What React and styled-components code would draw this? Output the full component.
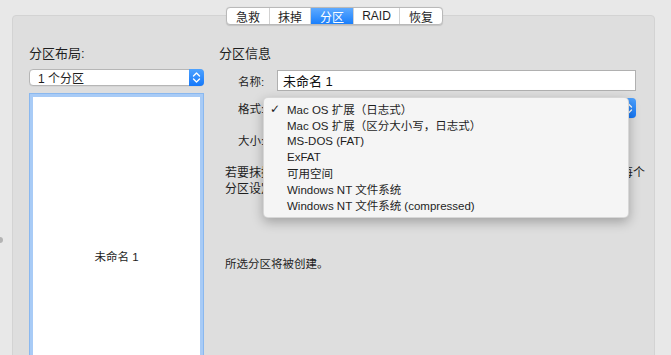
import React from "react";
import styled, { createGlobalStyle } from "styled-components";

const GlobalStyle = createGlobalStyle`
  html, body {
    margin: 0;
    padding: 0;
    background: #e8e8e8;
  }
  body {
    font-family: "Liberation Sans", "Noto Sans CJK SC", sans-serif;
    color: #1e1e1e;
  }
`;

const tabs = ["急救", "抹掉", "分区", "RAID", "恢复"];
const tabWidths = [42, 41, 43, 46, 43];

const formats = [
  "Mac OS 扩展（日志式）",
  "Mac OS 扩展（区分大小写，日志式）",
  "MS-DOS (FAT)",
  "ExFAT",
  "可用空间",
  "Windows NT 文件系统",
  "Windows NT 文件系统 (compressed)",
];

const Stepper = () => (
  <StepperBox>
    <svg width="9" height="13" viewBox="0 0 9 13">
      <path
        d="M1.5 5 L4.5 2 L7.5 5 M1.5 8 L4.5 11 L7.5 8"
        fill="none"
        stroke="#ffffff"
        strokeWidth="1.4"
        strokeLinecap="round"
        strokeLinejoin="round"
      />
    </svg>
  </StepperBox>
);

const App = () => {
  return (
    <>
      <GlobalStyle />
      <Window>
        <EdgeDot />
        <TabBar>
          {tabs.map((t, i) => (
            <Tab key={t} $active={i === 2} $width={tabWidths[i]}>
              {t}
            </Tab>
          ))}
        </TabBar>
        <Panel>
          <LeftColumn>
            <Heading>分区布局:</Heading>
            <Popup>
              <PopupText>1 个分区</PopupText>
              <Stepper />
            </Popup>
            <ListBox>
              <ListItem>未命名 1</ListItem>
            </ListBox>
          </LeftColumn>
          <RightColumn>
            <Heading>分区信息</Heading>
            <Form>
              <Label>名称:</Label>
              <TextField>未命名 1</TextField>
              <Label>格式:</Label>
              <FormatCell>
                <Popup $tall>
                  <PopupText />
                  <Stepper />
                </Popup>
                <Menu>
                  {formats.map((f, i) => (
                    <MenuItem key={f}>
                      <Check>{i === 0 ? "✓" : ""}</Check>
                      {f}
                    </MenuItem>
                  ))}
                </Menu>
              </FormatCell>
              <Label $spaced>大小:</Label>
              <SizeField />
            </Form>
            <Description>
              <Line>若要抹掉并对此磁盘进行分区，请从分区布局弹出式菜单中选择布局，再为每个</Line>
              <Line>分区设定选项，然后点按应用。</Line>
            </Description>
            <Note>所选分区将被创建。</Note>
          </RightColumn>
        </Panel>
      </Window>
    </>
  );
};

export default App;

const Window = styled.div`
  position: relative;
  width: 671px;
  height: 355px;
  overflow: hidden;
  padding-top: 7px;
  box-sizing: border-box;
  display: flex;
  flex-direction: column;
  align-items: center;
`;

const EdgeDot = styled.span`
  position: absolute;
  left: -3px;
  top: 237px;
  width: 6px;
  height: 6px;
  border-radius: 50%;
  background: #b4b4b4;
`;

const TabBar = styled.div`
  position: relative;
  z-index: 2;
  flex-shrink: 0;
  display: flex;
  height: 18px;
  margin-bottom: -10px;
  margin-left: -2px;
  background: #ffffff;
  border: 1px solid #b9b9b9;
  border-radius: 4px;
  box-sizing: border-box;
  overflow: hidden;
  box-shadow: 0 0.5px 1px rgba(0, 0, 0, 0.12);
`;

const Tab = styled.div`
  width: ${(p) => p.$width}px;
  display: flex;
  align-items: center;
  justify-content: center;
  font-size: 12px;
  color: ${(p) => (p.$active ? "#ffffff" : "#1e1e1e")};
  background: ${(p) =>
    p.$active ? "linear-gradient(#5eaaff, #1a7ffb)" : "transparent"};
  border-left: 1px solid #d2d2d2;
  box-sizing: border-box;

  &:first-child {
    border-left: none;
  }
`;

const Panel = styled.div`
  align-self: stretch;
  flex-shrink: 0;
  height: 360px;
  margin: 0 16px 0 12px;
  background: #dedede;
  border: 1px solid #d3d3d3;
  border-radius: 4px;
  padding: 30px 0 0 16px;
  display: flex;
  gap: 15px;
`;

const LeftColumn = styled.div`
  width: 175px;
  display: flex;
  flex-direction: column;
`;

const RightColumn = styled.div`
  width: 417px;
  display: flex;
  flex-direction: column;
`;

const Heading = styled.div`
  font-size: 13px;
  line-height: 16px;
  color: #1e1e1e;
`;

const Popup = styled.div`
  margin-top: ${(p) => (p.$tall ? "0" : "7px")};
  height: ${(p) => (p.$tall ? "20px" : "17px")};
  display: flex;
  align-items: stretch;
  background: #ffffff;
  border: 1px solid #b6b6b6;
  border-radius: 4px;
  box-sizing: border-box;
  box-shadow: 0 0.5px 0.5px rgba(0, 0, 0, 0.08);
`;

const PopupText = styled.div`
  flex: 1;
  padding-left: 8px;
  font-size: 12px;
  display: flex;
  align-items: center;
`;

const StepperBox = styled.div`
  width: 15px;
  margin: -1px -1px -1px 0;
  border-radius: 0 4px 4px 0;
  background: linear-gradient(#4ea2ff, #1478fa);
  display: flex;
  align-items: center;
  justify-content: center;
`;

const ListBox = styled.div`
  margin-top: 7px;
  height: 300px;
  background: #ffffff;
  border: 1px solid #8ab8ef;
  box-shadow: inset 0 0 0 3px #a8cbf6;
  box-sizing: border-box;
  display: flex;
  align-items: center;
  justify-content: center;
`;

const ListItem = styled.div`
  font-size: 11.5px;
  margin-top: 25px;
  color: #1e1e1e;
`;

const Form = styled.div`
  margin-top: 8px;
  padding-left: 19px;
  display: grid;
  grid-template-columns: 39px 1fr;
  row-gap: 7px;
  align-items: center;
`;

const Label = styled.div`
  font-size: 11.5px;
  color: #1e1e1e;
  margin-top: ${(p) => (p.$spaced ? "4px" : "0")};
`;

const TextField = styled.div`
  height: 21px;
  box-sizing: border-box;
  background: #ffffff;
  border: 1px solid #b0b0b0;
  padding-left: 5px;
  font-size: 13px;
  display: flex;
  align-items: center;
  color: #111111;
`;

const FormatCell = styled.div`
  position: relative;
`;

const SizeField = styled.div`
  margin-top: 4px;
  height: 21px;
  width: 120px;
  background: #ffffff;
  border: 1px solid #b0b0b0;
  box-sizing: border-box;
`;

const Menu = styled.div`
  position: absolute;
  z-index: 3;
  left: -14px;
  top: -1px;
  width: 366px;
  padding: 3px 0 4px;
  background: #f5f5f5;
  border-radius: 5px;
  border: 0.5px solid rgba(0, 0, 0, 0.12);
  box-shadow: 0 4px 12px rgba(0, 0, 0, 0.28);
  box-sizing: border-box;
`;

const MenuItem = styled.div`
  height: 16px;
  display: flex;
  align-items: center;
  font-size: 11.5px;
  color: #1e1e1e;
  white-space: nowrap;
`;

const Check = styled.span`
  width: 23px;
  padding-left: 6px;
  box-sizing: border-box;
  font-size: 12px;
  font-weight: bold;
  font-family: "DejaVu Sans", sans-serif;
`;

const Description = styled.div`
  margin-top: 15px;
  padding-left: 6px;
  font-size: 12px;
  line-height: 16px;
`;

const Line = styled.div`
  white-space: nowrap;
`;

const Note = styled.div`
  margin-top: 59px;
  padding-left: 6px;
  font-size: 11.5px;
  line-height: 16px;
`;
